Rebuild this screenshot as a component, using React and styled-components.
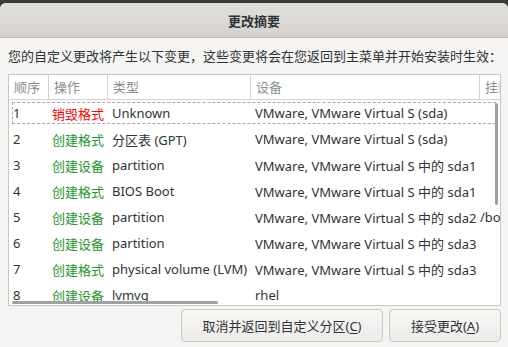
import React from "react";
import styled, { createGlobalStyle } from "styled-components";

const GlobalStyle = createGlobalStyle`
  html, body {
    margin: 0;
    padding: 0;
    background: #3a3a3a;
  }
  body {
    font-family: "Noto Sans", "Noto Sans CJK SC", sans-serif;
    font-size: 13px;
  }
`;

const rows = [
  { n: 1, op: "销毁格式", kind: "destroy", type: "Unknown", dev: "VMware, VMware Virtual S (sda)", mount: "" },
  { n: 2, op: "创建格式", kind: "create", type: "分区表 (GPT)", dev: "VMware, VMware Virtual S (sda)", mount: "" },
  { n: 3, op: "创建设备", kind: "create", type: "partition", dev: "VMware, VMware Virtual S 中的 sda1", mount: "" },
  { n: 4, op: "创建格式", kind: "create", type: "BIOS Boot", dev: "VMware, VMware Virtual S 中的 sda1", mount: "" },
  { n: 5, op: "创建设备", kind: "create", type: "partition", dev: "VMware, VMware Virtual S 中的 sda2", mount: "/boot" },
  { n: 6, op: "创建设备", kind: "create", type: "partition", dev: "VMware, VMware Virtual S 中的 sda3", mount: "" },
  { n: 7, op: "创建格式", kind: "create", type: "physical volume (LVM)", dev: "VMware, VMware Virtual S 中的 sda3", mount: "" },
  { n: 8, op: "创建设备", kind: "create", type: "lvmvg", dev: "rhel", mount: "" },
];

const App = () => {
  return (
    <>
      <GlobalStyle />
      <Screen>
        <Dialog>
          <TitleBar>更改摘要</TitleBar>
          <Body>
            <Intro>您的自定义更改将产生以下变更，这些变更将会在您返回到主菜单并开始安装时生效：</Intro>
            <TableBox>
              <HeaderRow>
                <HeadCell $w={40}>顺序</HeadCell>
                <HeadCell $w={59}>操作</HeadCell>
                <HeadCell $w={143}>类型</HeadCell>
                <HeadCell $w={229}>设备</HeadCell>
                <HeadCell $w={40} $last>挂载点</HeadCell>
              </HeaderRow>
              <Rows>
                {rows.map((r) => (
                  <Row key={r.n} $focus={r.n === 1}>
                    <Cell $w={39}>{r.n}</Cell>
                    <OpCell $w={60} $kind={r.kind}>{r.op}</OpCell>
                    <Cell $w={143}>{r.type}</Cell>
                    <Cell $w={225}>{r.dev}</Cell>
                    <Cell $w={60}>{r.mount}</Cell>
                  </Row>
                ))}
                <VScroll />
                <HScroll />
              </Rows>
            </TableBox>
            <Actions>
              <Button $w={202}>
                取消并返回到自定义分区(<u>C</u>)
              </Button>
              <Button $w={112}>
                接受更改(<u>A</u>)
              </Button>
            </Actions>
          </Body>
        </Dialog>
      </Screen>
    </>
  );
};

const Screen = styled.div`
  width: 508px;
  height: 347px;
  padding-top: 3px;
  box-sizing: border-box;
  overflow: hidden;
`;

const Dialog = styled.div`
  height: 344px;
  background: #f5f4f2;
  border-radius: 6px 6px 0 0;
  overflow: hidden;
  display: flex;
  flex-direction: column;
`;

const TitleBar = styled.div`
  height: 34px;
  flex: none;
  display: flex;
  align-items: center;
  justify-content: center;
  background: linear-gradient(#e0dedb, #d6d3cf);
  border-bottom: 1px solid #bfb8b1;
  color: #2e3436;
  font-weight: bold;
  font-size: 13px;
`;

const Body = styled.div`
  flex: 1;
  display: flex;
  flex-direction: column;
  padding: 8px 7px 0 8px;
`;

const Intro = styled.div`
  color: #2e3436;
  height: 20px;
  line-height: 20px;
  margin-bottom: 8px;
  white-space: nowrap;
`;

const TableBox = styled.div`
  height: 230px;
  flex: none;
  border: 1px solid #c9c7c4;
  background: #ffffff;
  display: flex;
  flex-direction: column;
  overflow: hidden;
`;

const HeaderRow = styled.div`
  display: flex;
  height: 24px;
  flex: none;
  border-bottom: 1px solid #d4d2cf;
`;

const HeadCell = styled.div`
  width: ${(p) => p.$w}px;
  flex: none;
  box-sizing: border-box;
  padding-left: 5px;
  border-right: ${(p) => (p.$last ? "none" : "1px solid #d4d2cf")};
  color: #8b8e8f;
  line-height: 24px;
  white-space: nowrap;
  overflow: hidden;
`;

const Rows = styled.div`
  position: relative;
  flex: 1;
  padding-top: 2px;
  overflow: hidden;
`;

const Row = styled.div`
  display: flex;
  box-sizing: border-box;
  height: 22px;
  margin: 0 4px 4px 3px;
  align-items: center;
  border: 1px dashed ${(p) => (p.$focus ? "#a8a8a8" : "transparent")};
  color: #2e3436;
  white-space: nowrap;
`;

const Cell = styled.div`
  width: ${(p) => p.$w}px;
  flex: none;
  overflow: hidden;
`;

const OpCell = styled(Cell)`
  color: ${(p) => (p.$kind === "destroy" ? "#ff0000" : "#23962a")};
`;

const VScroll = styled.div`
  position: absolute;
  right: 2px;
  top: 3px;
  width: 3px;
  height: 102px;
  background: #a0a0a0;
  border-radius: 2px;
`;

const HScroll = styled.div`
  position: absolute;
  left: 3px;
  bottom: 1px;
  width: 206px;
  height: 3px;
  background: #a0a0a0;
  border-radius: 2px;
`;

const Actions = styled.div`
  display: flex;
  justify-content: flex-end;
  gap: 6px;
  margin-top: 3px;
`;

const Button = styled.button`
  width: ${(p) => p.$w}px;
  height: 33px;
  border: 1px solid #cdc7c2;
  border-radius: 4px;
  background: linear-gradient(#f8f7f6, #edebe9);
  color: #2e3436;
  font-family: "Noto Sans", "Noto Sans CJK SC", sans-serif;
  font-size: 13px;
  padding: 0;

  u {
    text-decoration-thickness: 1px;
    text-underline-offset: 2px;
  }
`;

export default App;
